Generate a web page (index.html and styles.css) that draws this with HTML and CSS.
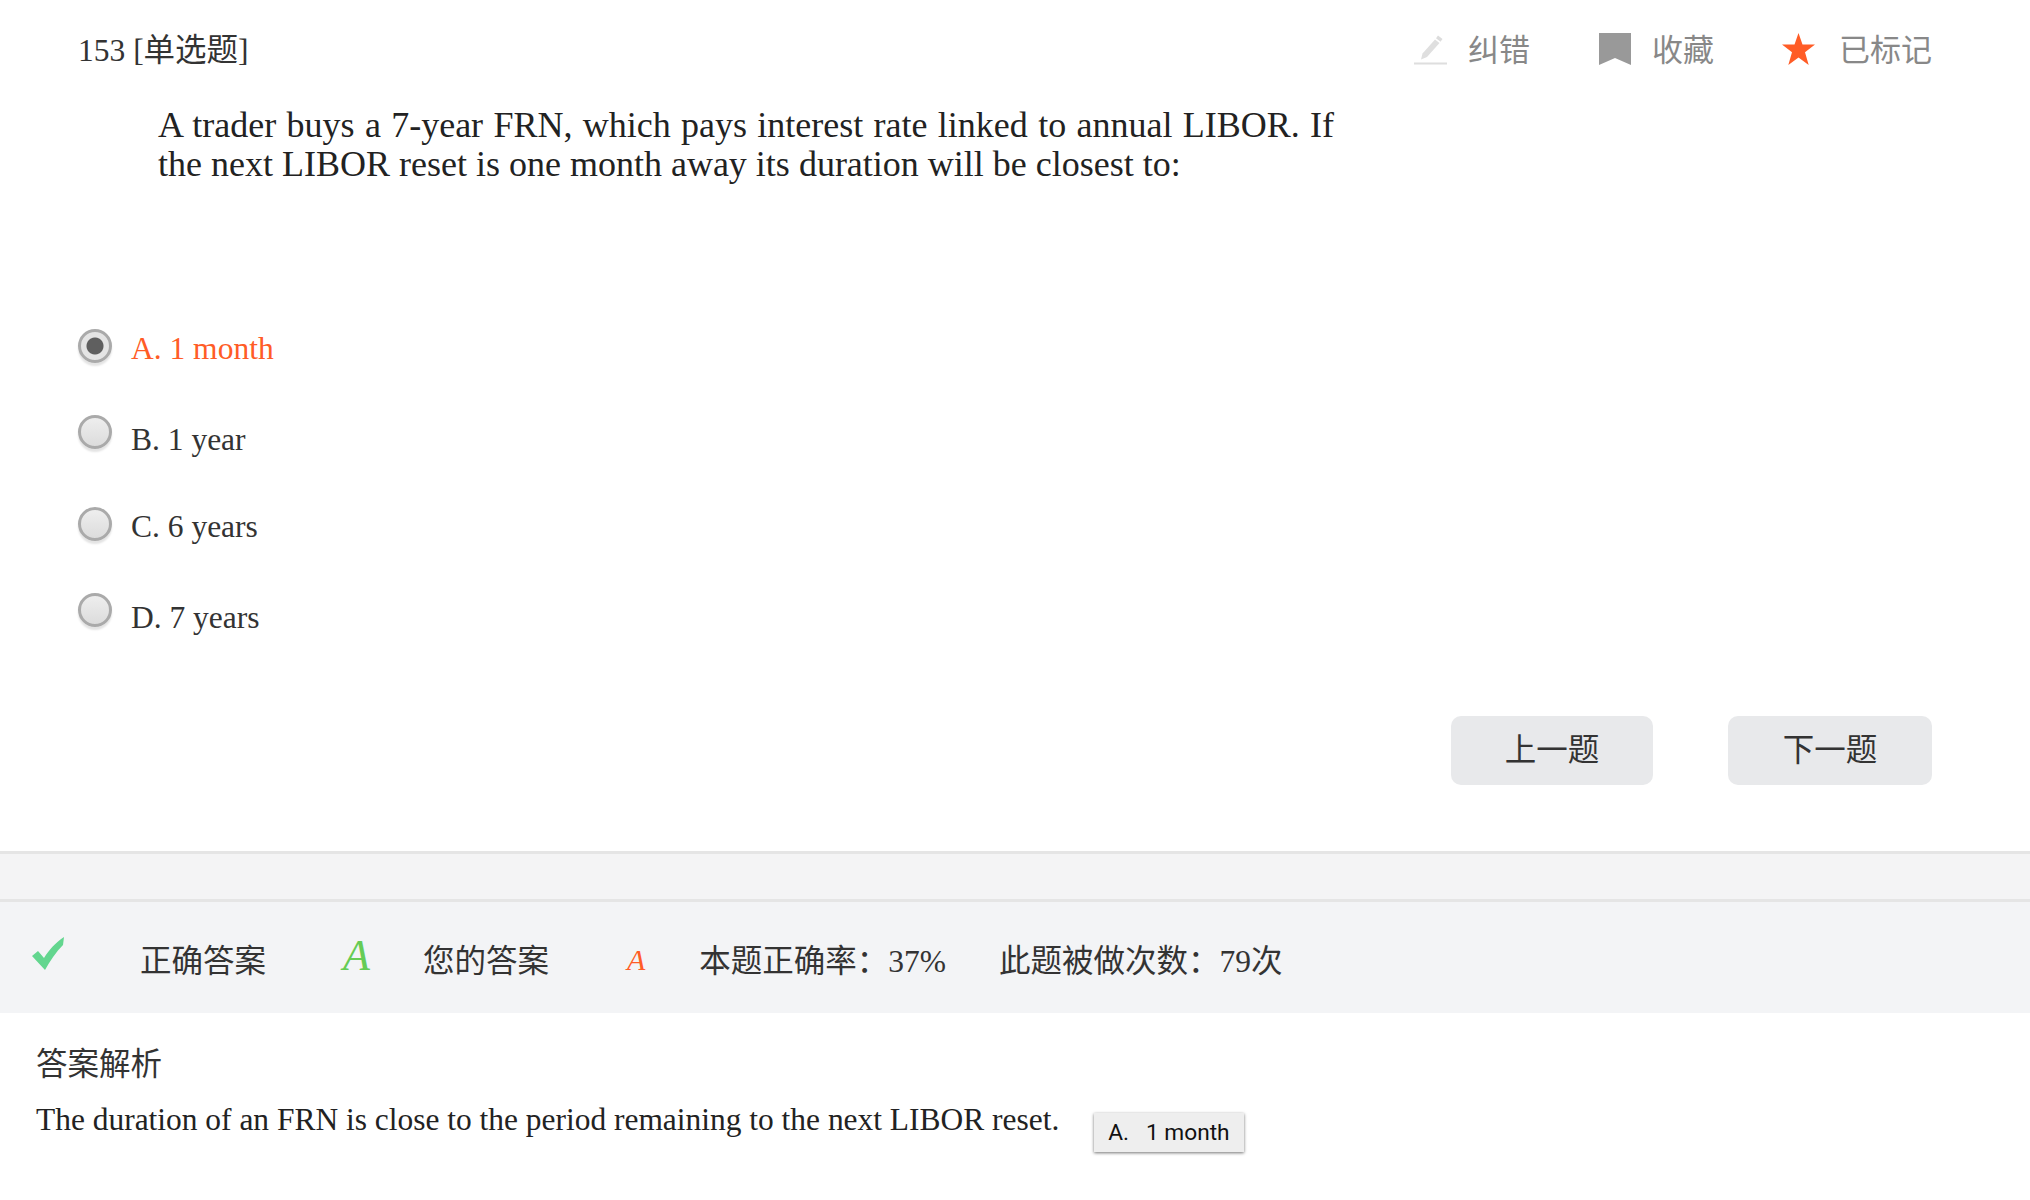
FILE: index.html
```html
<!DOCTYPE html>
<html lang="zh-CN">
<head>
    <meta charset="UTF-8">
    <title>153 单选题</title>
    <link rel="stylesheet" href="styles.css">
</head>
<body>
    <div class="question">
        <div class="question-head">
            <div class="question-no">153 [单选题]</div>
            <div class="tools">
                <div class="tool tool-fix">
                    <svg class="tool-icon" width="33" height="32" viewBox="0 0 33 32">
                        <path d="M24 2.500l4.500 3.500-2 2.800-4.500-3.500z" fill="#dcdcdc"/>
                        <path d="M21 6.500l4.500 3.500-12.500 14-6 2.500 1.500-6z" fill="#dfdfdf"/>
                        <rect x="0" y="29.500" width="33" height="2" fill="#dedede"/>
                    </svg>
                    <span>纠错</span>
                </div>
                <div class="tool tool-save">
                    <svg class="tool-icon" width="32" height="32" viewBox="0 0 32 32">
                        <path d="M0 0h32v32L16 25 0 32z" fill="#999"/>
                    </svg>
                    <span>收藏</span>
                </div>
                <div class="tool tool-mark">
                    <svg class="tool-icon" width="33" height="32" viewBox="0 0 33 32">
                        <path d="M16.500 0l4 11.500h12.500l-10 7.800 3.700 12.700-10.200-7.500-10.200 7.500 3.700-12.700-10-7.800h12.500z" fill="#ff5c26"/>
                    </svg>
                    <span>已标记</span>
                </div>
            </div>
        </div>
        <p class="question-text">A trader buys a 7-year FRN, which pays interest rate linked to annual LIBOR. If the next LIBOR reset is one month away its duration will be closest to:</p>
        <ul class="options">
            <li class="option selected"><span class="radio"></span><span class="option-text">A. 1 month</span></li>
            <li class="option"><span class="radio"></span><span class="option-text">B. 1 year</span></li>
            <li class="option"><span class="radio"></span><span class="option-text">C. 6 years</span></li>
            <li class="option"><span class="radio"></span><span class="option-text">D. 7 years</span></li>
        </ul>
        <div class="pager">
            <button class="pager-btn prev">上一题</button>
            <button class="pager-btn next">下一题</button>
        </div>
    </div>
    <div class="gap-band"></div>
    <div class="result">
        <svg class="check" width="33" height="33" viewBox="0 0 33 33">
            <path d="M0 19l6-5 6 7C17 13 23 6 32 0l-1 8C24 15 18 24 13 33z" fill="#63d68f"/>
        </svg>
        <span class="result-label correct-label">正确答案</span>
        <span class="answer-big">A</span>
        <span class="result-label your-label">您的答案</span>
        <span class="answer-small">A</span>
        <span class="result-label rate">本题正确率：37%</span>
        <span class="result-label count">此题被做次数：79次</span>
    </div>
    <div class="analysis">
        <h3 class="analysis-title">答案解析</h3>
        <div class="analysis-body">
            <span>The duration of an FRN is close to the period remaining to the next LIBOR reset.</span>
            <span class="answer-tag">A.&nbsp;&nbsp;&nbsp;1 month</span>
        </div>
    </div>
</body>
</html>
```

FILE: styles.css
```css
* {
    box-sizing: border-box;
}
body {
    margin: 0;
    background-color: #fff;
    color: #333;
    font-family: "Liberation Serif", "Noto Sans CJK SC", serif;
}
.question {
    height: 851px;
    padding: 27px 98px 0 78px;
}
.question-head {
    display: flex;
    justify-content: space-between;
    align-items: center;
    height: 40px;
}
.question-no {
    font-size: 31.500px;
}
.tools {
    display: flex;
    color: #888;
    font-size: 31px;
}
.tool {
    display: flex;
    align-items: center;
    height: 40px;
}
.tool-icon {
    margin: 4px 23px 0 0;
}
.tool-fix {
    margin-right: 69px;
}
.tool-fix .tool-icon {
    margin-right: 21px;
}
.tool-save {
    margin-right: 68px;
}
.tool-save .tool-icon {
    margin-right: 21px;
}
.tool-mark .tool-icon {
    margin-right: 24px;
}
.question-text {
    width: 1176px;
    margin: 39px 0 0 80px;
    font-size: 36px;
    line-height: 39px;
    text-align: justify;
    color: #222;
}
.options {
    list-style: none;
    margin: 120px 0 0;
    padding: 0;
    font-size: 31.500px;
}
.option {
    display: flex;
    align-items: center;
    height: 89px;
}
.option:nth-child(even) .option-text {
    padding-top: 4px;
}
.option:nth-child(even) .radio {
    margin-top: -11px;
}
.selected {
    color: #ff5c26;
}
.radio {
    width: 34px;
    height: 34px;
    margin: -6px 19px 0 0;
    border: 3px solid #aaa;
    border-radius: 50%;
    background: linear-gradient(#eee, #dcdcdc);
    box-shadow: 0 3px 2px #e4e4e4;
}
.selected .radio {
    background: radial-gradient(circle, #5f5f5f 0, #5f5f5f 8px, #e4e4e4 9px);
}
.pager {
    display: flex;
    justify-content: flex-end;
    gap: 75px;
    margin-top: 56px;
}
.pager-btn {
    width: 202px;
    height: 69px;
    padding: 0 0 8px;
    border: none;
    border-radius: 10px;
    background-color: #e8e9eb;
    color: #333;
    font-family: inherit;
    font-size: 31.500px;
}
.pager-btn.next {
    width: 204px;
}
.gap-band {
    height: 51px;
    background-color: #f4f4f5;
    border-top: 3px solid #e5e5e5;
    border-bottom: 3px solid #e5e5e5;
}
.result {
    display: flex;
    align-items: center;
    height: 111px;
    padding-left: 32px;
    background-color: #f3f4f6;
    font-size: 31.500px;
}
.check {
    margin: -8px 0 0 0;
}
.result-label {
    padding-top: 1px;
    white-space: nowrap;
}
.correct-label {
    margin-left: 75px;
}
.answer-big {
    margin: -4px 0 0 77px;
    color: #66cc55;
    font-size: 44px;
    font-style: italic;
}
.your-label {
    margin-left: 53px;
}
.answer-small {
    margin: 4px 0 0 78px;
    color: #ff5c26;
    font-size: 30px;
    font-style: italic;
}
.rate {
    margin-left: 54px;
}
.count {
    margin-left: 53px;
}
.analysis {
    min-height: 187px;
    padding: 32px 36px 0;
}
.analysis-title {
    margin: 0;
    font-size: 31.500px;
    font-weight: normal;
    line-height: 40px;
}
.analysis-body {
    display: flex;
    align-items: flex-start;
    margin-top: 17px;
    font-size: 31.450px;
    color: #222;
}
.answer-tag {
    margin: 11px 0 0 35px;
    padding: 0 14px;
    height: 39px;
    line-height: 39px;
    background-color: #eee;
    box-shadow: 0 1px 3px rgba(0, 0, 0, 0.55);
    color: #111;
    font-family: Roboto, "Liberation Sans", sans-serif;
    font-size: 22.700px;
    white-space: nowrap;
}
```
